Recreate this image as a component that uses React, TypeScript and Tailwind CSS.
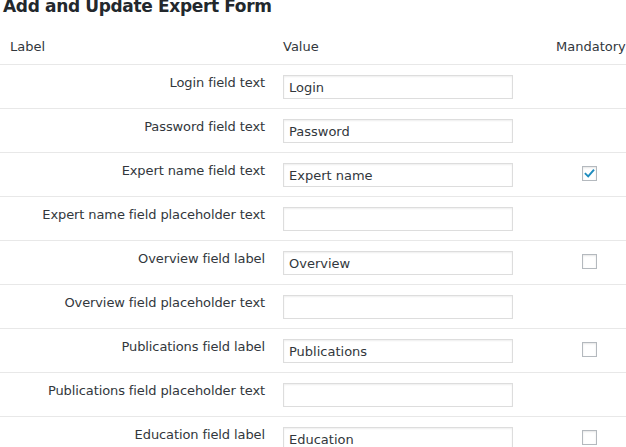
import React from "react";

type Row = { label: string; value: string; check?: "on" | "off" };

const rows: Row[] = [
  { label: "Login field text", value: "Login" },
  { label: "Password field text", value: "Password" },
  { label: "Expert name field text", value: "Expert name", check: "on" },
  { label: "Expert name field placeholder text", value: "" },
  { label: "Overview field label", value: "Overview", check: "off" },
  { label: "Overview field placeholder text", value: "" },
  { label: "Publications field label", value: "Publications", check: "off" },
  { label: "Publications field placeholder text", value: "" },
  { label: "Education field label", value: "Education", check: "off" },
];

function Check({ on }: { on: boolean }) {
  return (
    <div className="w-[15px] h-[15px] border border-[#b4b9be] bg-white shadow-[inset_0_1px_2px_rgba(0,0,0,0.1)] flex items-center justify-center">
      {on && (
        <svg width="13" height="13" viewBox="0 0 20 20">
          <path d="M4 10.5 L8 14.5 L16 5" fill="none" stroke="#1e8cbe" strokeWidth="3" strokeLinecap="square" />
        </svg>
      )}
    </div>
  );
}

export default function App() {
  return (
    <div className="w-[626px] h-[447px] overflow-hidden bg-white text-[#32373c]" style={{ fontFamily: '"DejaVu Sans", Verdana, sans-serif' }}>
      <h1 className="text-[17px] font-bold leading-[20px] tracking-[-0.35px] text-[#23282d] pl-[3px] -mt-[4px] h-[25px]">Add and Update Expert Form</h1>
      <div className="grid grid-cols-[283px_273px_1fr] text-[13px] h-[43px] items-center pt-[9px]">
        <div className="pl-[10px]">Label</div>
        <div>Value</div>
        <div>Mandatory</div>
      </div>
      {rows.map((r) => (
        <div key={r.label} className="grid grid-cols-[283px_273px_1fr] h-[44px] border-t border-[#e8e8e8] text-[13px]">
          <div className="text-right pr-[18px] pt-[9px] leading-[17px] tracking-[-0.1px]">{r.label}</div>
          <div className="pt-[10px]">
            <div className="w-[230px] h-[24px] border border-[#dddddd] shadow-[inset_0_1px_2px_rgba(0,0,0,0.07)] pl-[5px] leading-[24px] text-[13px] text-[#32373c]">
              {r.value}
            </div>
          </div>
          <div className="pt-[13px] pl-[26px]">
            {r.check && <Check on={r.check === "on"} />}
          </div>
        </div>
      ))}
    </div>
  );
}
